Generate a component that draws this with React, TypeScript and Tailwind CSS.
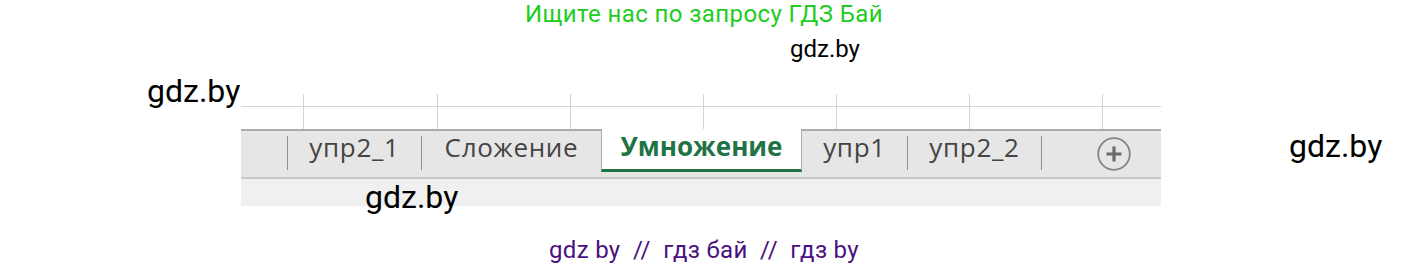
import React from "react";

const COLS = [63, 134, 133, 133, 133, 133, 133, 58];

function Sep() {
  return (
    <div className="border-t-2 border-[#ababab] h-full">
      <div className="mt-[5px] h-[34px] w-px bg-[#8f8f8f]" />
    </div>
  );
}

function Tab({ label, width }: { label: string; width: number }) {
  return (
    <div
      className="h-full border-t-2 border-[#ababab] pt-[3px] text-center text-[26px] leading-none tracking-[0.7px] text-[#444]"
      style={{ width }}
    >
      {label}
    </div>
  );
}

function Sheet() {
  return (
    <div className="w-[920px] font-['Open_Sans',sans-serif]">
      {/* grid cells */}
      <div className="flex flex-col bg-white">
        <div className="flex h-[13px]">
          {COLS.map((w, i) => (
            <div
              key={i}
              className={`border-b border-[#d4d4d4] ${i < COLS.length - 1 ? "border-r" : ""}`}
              style={{ width: w }}
            />
          ))}
        </div>
        <div className="flex h-[22px]">
          {COLS.map((w, i) => (
            <div
              key={i}
              className={`border-[#d4d4d4] ${i < COLS.length - 1 ? "border-r" : ""}`}
              style={{ width: w }}
            />
          ))}
        </div>
      </div>

      {/* sheet tabs */}
      <div className="flex h-[48px] items-start bg-[#e6e6e6]">
        <div className="h-full w-[46px] border-t-2 border-[#ababab]" />
        <Sep />
        <Tab label="упр2_1" width={133} />
        <Sep />
        <Tab label="Сложение" width={179} />
        <div className="h-[43px] w-[201px] border-x border-b-[3px] border-x-[#ababab] border-b-[#217346] bg-white pt-[4px] text-center text-[26px] font-bold leading-none text-[#217346]">
          Умножение
        </div>
        <Tab label="упр1" width={105} />
        <Sep />
        <Tab label="упр2_2" width={133} />
        <Sep />
        <div className="h-full w-[119px] border-t-2 border-[#ababab] pl-[55px] pt-[6px]">
          <svg width="34" height="34" viewBox="0 0 34 34">
            <circle cx="17" cy="17" r="15.8" fill="none" stroke="#858585" strokeWidth="1.8" />
            <path d="M17 9.5v15M9.5 17h15" stroke="#6a6a6a" strokeWidth="3.2" />
          </svg>
        </div>
      </div>
      <div className="h-[2px] bg-[#c8c8c8]" />
      <div className="h-[27px] bg-[#f0f0f0]" />
    </div>
  );
}

export default function App() {
  return (
    <div className="relative h-[264px] w-[1408px] overflow-hidden bg-white font-['Roboto',sans-serif]">
      <div className="flex flex-col">
        <div className="mt-[2px] text-center text-[24px] leading-none tracking-[0.4px] text-[#22cc22]">
          Ищите нас по запросу ГДЗ Бай
        </div>
        <div className="mt-[68px] pl-[241px]">
          <Sheet />
        </div>
        <div className="mt-[32px] whitespace-pre text-center text-[24px] leading-none tracking-[0.3px] text-[#4a1080]">
          {"gdz by  //  гдз бай  //  гдз by"}
        </div>
      </div>

      {/* watermarks */}
      <div className="absolute left-[790px] top-[37px] text-[24px] leading-none text-black">gdz.by</div>
      <div className="absolute left-[147px] top-[75px] text-[32px] leading-none text-black">gdz.by</div>
      <div className="absolute left-[1289px] top-[130px] text-[32px] leading-none text-black">gdz.by</div>
      <div className="absolute left-[365px] top-[181px] text-[32px] leading-none text-black">gdz.by</div>
    </div>
  );
}
